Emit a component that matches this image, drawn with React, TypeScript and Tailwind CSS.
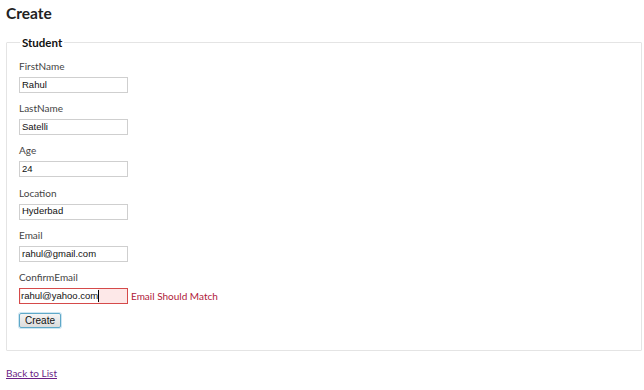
import React from 'react';

const fields = [
  { label: 'FirstName', value: 'Rahul' },
  { label: 'LastName', value: 'Satelli' },
  { label: 'Age', value: '24' },
  { label: 'Location', value: 'Hyderbad' },
  { label: 'Email', value: 'rahul@gmail.com' },
];

const App: React.FC = () => {
  return (
    <div className="w-[644px] h-[390px] bg-white text-[#333] font-['Lato',sans-serif] relative overflow-hidden">
      <h2 className="pl-[6px] pt-[3px] text-[15.5px] font-bold leading-[20px] text-[#222]">Create</h2>

      <fieldset className="ml-[6px] mr-[2px] mt-[12px] h-[316px] border border-[#e4e4e4] rounded-[1px] pl-[12px] pr-[13px] pb-0 pt-0">
        <legend className="px-[2px] ml-[1px] text-[11.5px] font-bold leading-[14px] text-[#111]">
          <span className="relative top-[1px]">Student</span>
        </legend>

        <div className="flex flex-col">
          {fields.map((f, i) => (
            <div key={f.label} className={i === 0 ? 'mt-[10px]' : 'mt-[8.2px]'}>
              <div className="text-[10px] leading-[14px] text-[#444]">{f.label}</div>
              <div className="mt-[4px] w-[109px] h-[16px] border border-[#cfcfcf] bg-white flex items-center px-[2px] text-[9.5px] font-['Liberation_Sans',sans-serif] text-[#111]">
                {f.value}
              </div>
            </div>
          ))}

          <div className="mt-[8.2px]">
            <div className="text-[10px] leading-[14px] text-[#444]">ConfirmEmail</div>
            <div className="mt-[4px] h-[16px] flex items-center">
              <div className="w-[109px] h-[16px] border border-[#d54a4a] bg-[#fde8e8] flex items-center px-[1px] text-[9.5px] font-['Liberation_Sans',sans-serif] text-[#111]">
                <span className="bg-white">rahul@yahoo.com</span>
                <span className="w-px h-[12px] bg-black" />
              </div>
              <span className="ml-[3px] text-[10px] leading-[14px] text-[#b0203a]">Email Should Match</span>
            </div>
          </div>

          <div className="mt-[9px] flex">
            <button className="w-[42px] h-[15px] border border-[#5fa8c8] rounded-[2px] bg-gradient-to-b from-[#f4f4f4] to-[#dcdcdc] text-[10px] leading-[13px] font-['Liberation_Sans',sans-serif] text-[#111] shadow-[0_0_0_1px_#cde6f2]">
              Create
            </button>
          </div>
        </div>
      </fieldset>

      <div className="pl-[6px] mt-[13px] leading-[14px]">
        <a href="#" className="text-[10px] text-[#6b1e86] underline">Back to List</a>
      </div>
    </div>
  );
};

export default App;
